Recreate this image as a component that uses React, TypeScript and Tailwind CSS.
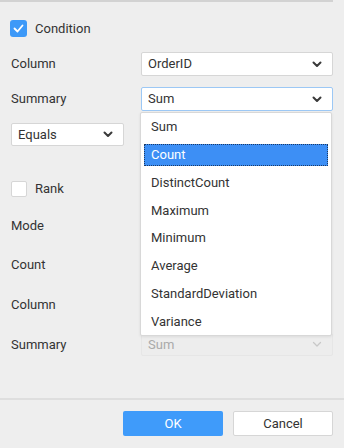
function Chevron({ muted = false }: { muted?: boolean }) {
  return (
    <svg width="10" height="7" viewBox="0 0 10 7" className="shrink-0">
      <path
        d="M1.5 1.5l3.5 3.5 3.5-3.5"
        fill="none"
        stroke={muted ? "#c8c8c8" : "#3a3a3a"}
        strokeWidth={muted ? 1.3 : 2}
        strokeLinecap="round"
        strokeLinejoin="round"
      />
    </svg>
  );
}

interface SelectProps {
  value: string;
  focused?: boolean;
  disabled?: boolean;
  className?: string;
}

function Select({ value, focused, disabled, className = "" }: SelectProps) {
  const border = disabled
    ? "border-[#e6e6e6] bg-[#ededed] text-[#aaaaaa]"
    : focused
      ? "border-[#9cc8f5] bg-white text-[#333]"
      : "border-[#d6d6d6] bg-white text-[#333]";
  return (
    <div
      className={`flex items-center justify-between rounded-[2px] border pl-[6px] pr-[10px] text-[13px] ${border} ${className}`}
    >
      <span>{value}</span>
      <Chevron muted={disabled} />
    </div>
  );
}

const options = [
  "Sum",
  "Count",
  "DistinctCount",
  "Maximum",
  "Minimum",
  "Average",
  "StandardDeviation",
  "Variance",
];

export default function App() {
  return (
    <div
      className="relative h-[448px] w-[344px] overflow-hidden bg-[#eeeeee] text-[13px] text-[#333]"
      style={{ fontFamily: "Roboto, 'Liberation Sans', sans-serif" }}
    >
      <div className="h-[2px] w-[333px] bg-[#d2d2d2]" />

      <div className="px-[11px]">
        {/* condition */}
        <div className="mt-[16px] flex h-[21px] items-center gap-[8px]">
          <div className="-ml-[1px] flex h-[17px] w-[17px] items-center justify-center rounded-[3px] bg-[#3d99f8]">
            <svg width="11" height="9" viewBox="0 0 11 9">
              <path d="M1.5 4.5l3 3 5-6" fill="none" stroke="white" strokeWidth="1.8" strokeLinecap="round" strokeLinejoin="round" />
            </svg>
          </div>
          <span>Condition</span>
        </div>

        <div className="mt-[13px] flex h-[24px] items-center justify-between">
          <span>Column</span>
          <Select value="OrderID" className="h-[24px] w-[192px]" />
        </div>

        <div className="mt-[11px] flex h-[24px] items-center justify-between">
          <span>Summary</span>
          <Select value="Sum" focused className="h-[24px] w-[192px]" />
        </div>

        <div className="mt-[12px] flex h-[23px] items-center">
          <Select value="Equals" className="h-[23px] w-[113px]" />
        </div>

        {/* rank */}
        <div className="mt-[34px] flex h-[18px] items-center gap-[8px]">
          <div className="h-[16px] w-[16px] rounded-[2px] border border-[#d6d6d6] bg-white" />
          <span>Rank</span>
        </div>

        <div className="mt-[16px] flex h-[24px] items-center">
          <span>Mode</span>
        </div>
        <div className="mt-[15px] flex h-[24px] items-center">
          <span>Count</span>
        </div>
        <div className="mt-[16px] flex h-[24px] items-center">
          <span>Column</span>
        </div>
        <div className="mt-[16px] flex h-[23px] items-center justify-between">
          <span>Summary</span>
          <Select value="Sum" disabled className="h-[23px] w-[192px]" />
        </div>
      </div>

      <div className="mt-[42px] h-[2px] w-full bg-[#dedede]" />

      <div className="mt-[11px] flex justify-end gap-[10px] pr-[11px]">
        <button className="h-[25px] w-[100px] rounded-[2px] bg-[#3f9bfa] text-[13px] text-white">
          OK
        </button>
        <button className="h-[25px] w-[100px] rounded-[2px] border border-[#d6d6d6] bg-white text-[13px] text-[#333]">
          Cancel
        </button>
      </div>

      {/* open dropdown list */}
      <div className="absolute left-[140px] top-[112px] w-[192px] rounded-[2px] border border-[#d8d8d8] bg-white shadow-[0_1px_3px_rgba(0,0,0,0.08)]">
        {options.map((o) => (
          <div key={o} className="flex h-[27.8px] items-center px-[3px]">
            {o === "Count" ? (
              <div className="flex h-[22px] w-full items-center border border-dotted border-[#1a3a66] bg-[#3d8ff5] pl-[6px] text-white">
                {o}
              </div>
            ) : (
              <span className="pl-[7px]">{o}</span>
            )}
          </div>
        ))}
      </div>
    </div>
  );
}
